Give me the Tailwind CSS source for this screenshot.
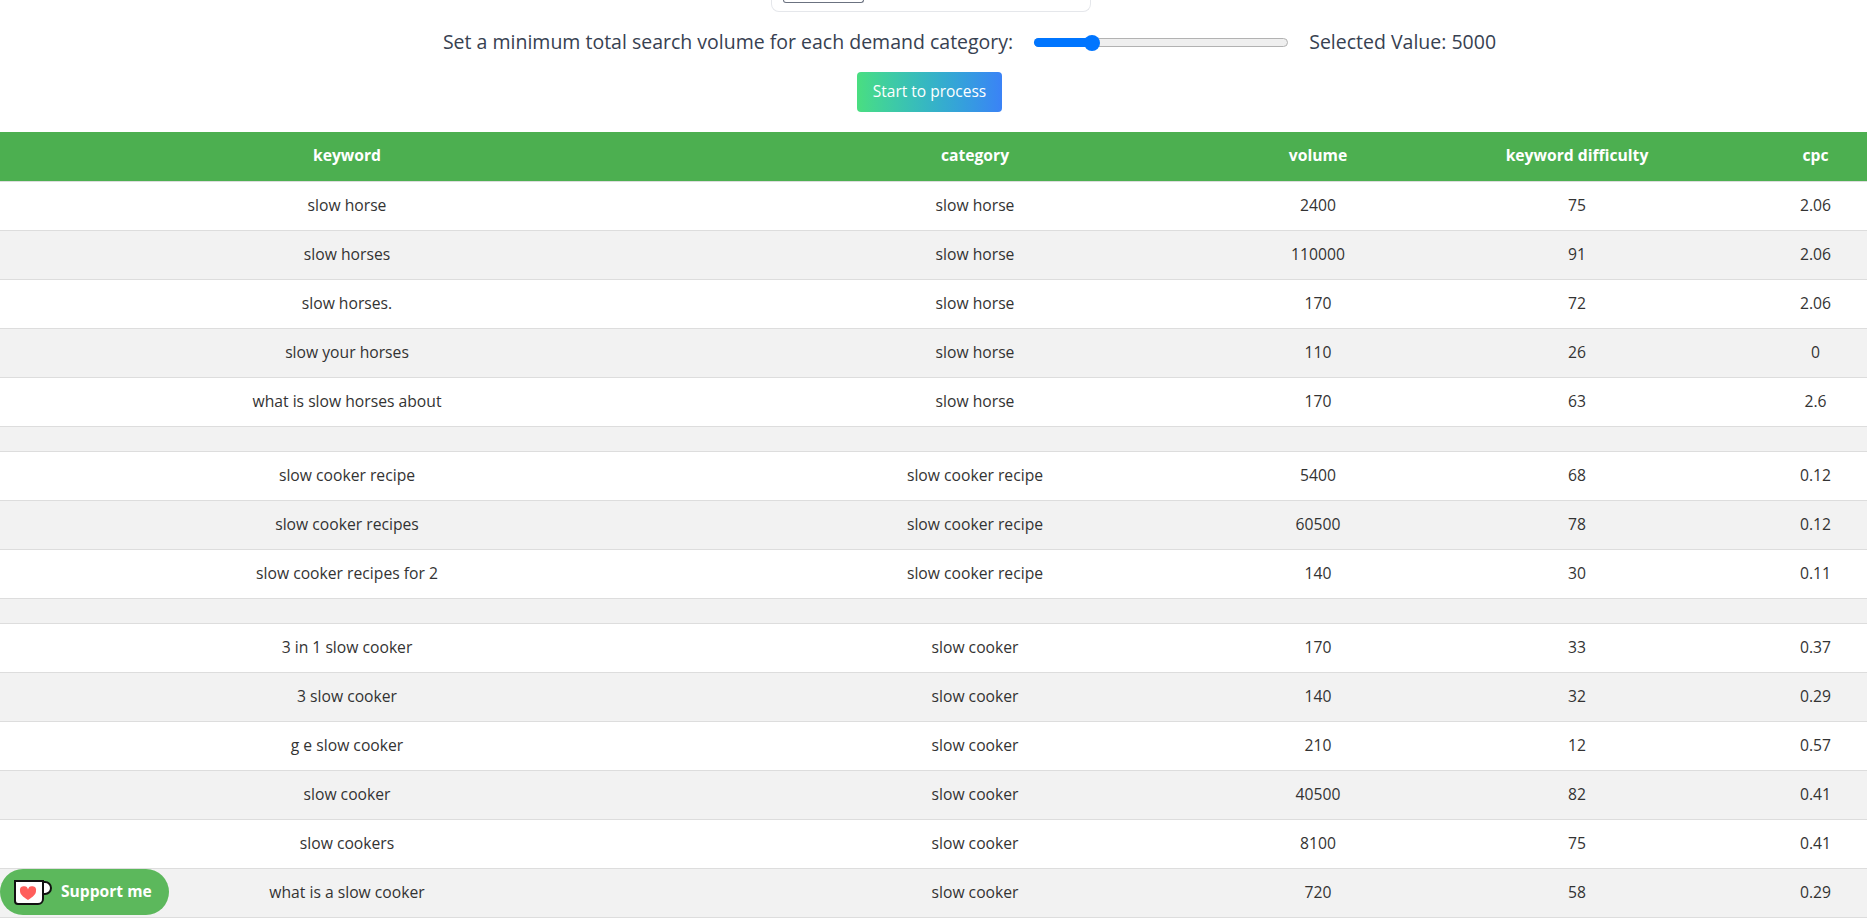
<!DOCTYPE html>
<html lang="en">
<head>
  <meta charset="UTF-8">
  <title>Keyword categories</title>
  <script src="https://cdn.jsdelivr.net/npm/@tailwindcss/browser@4"></script>
</head>
<body class="bg-white text-[#212529] font-['Open_Sans',sans-serif] overflow-hidden h-[920px]">
  <div class="flex justify-center h-3 pr-[6px]">
    <div class="w-[320px] h-3 border border-t-0 border-[#e5e7eb] rounded-b-lg pl-[11px]">
      <div class="w-[81px] h-[3px] border border-t-0 border-[#6b7280] rounded-b-sm"></div>
    </div>
  </div>

  <div class="flex justify-center items-center h-[60px] pl-[72px] text-[19.5px] text-[#374151]">
    <label>Set a minimum total search volume for each demand category:</label>
    <div class="w-[254px] h-[9px] mx-[21px] rounded-full bg-[#efefef] border border-[#b2b2b2] relative">
      <div class="absolute left-[-1px] top-[-1px] h-[9px] w-[58px] rounded-l-full bg-[#0075ff]"></div>
      <div class="absolute left-[49px] top-[-4px] w-4 h-4 rounded-full bg-[#0075ff]"></div>
    </div>
    <span>Selected Value: 5000</span>
  </div>

  <div class="flex justify-center pr-[8px]">
    <button class="w-[145px] h-10 rounded text-white text-[15.5px] bg-gradient-to-r from-[#4ade80] to-[#3b82f6]">Start to process</button>
  </div>

  <table class="w-full mt-[20px] border-collapse table-fixed text-[15.7px] text-center text-[#333333]">
    <colgroup>
      <col class="w-[694px]"><col class="w-[562px]"><col class="w-[124px]"><col class="w-[394px]"><col>
    </colgroup>
    <thead>
      <tr class="h-[49px] bg-[#4caf50] text-white font-bold border-b border-[#dddddd]">
        <th class="pb-[1px]">keyword</th><th class="pb-[1px]">category</th><th class="pb-[1px]">volume</th><th class="pb-[1px]">keyword difficulty</th><th class="pb-[1px] pr-[10px]">cpc</th>
      </tr>
    </thead>
    <tbody id="rows"></tbody>
  </table>

  <a class="fixed left-0 bottom-[5px] h-[46px] w-[169px] rounded-[23px] bg-[#5cb85c] flex items-center text-white font-['Open_Sans',sans-serif] font-bold text-[15.6px]">
    <svg class="ml-[14px] mr-[9px]" width="38" height="25" viewBox="0 0 38 25">
      <path d="M28 2h3a6 6 0 0 1 6 6v0a6 6 0 0 1-6 6h-3z" fill="#fff" stroke="#111" stroke-width="2"/>
      <path d="M1 1h28v18a5 5 0 0 1-5 5H4a3 3 0 0 1-3-3z" fill="#fff" stroke="#111" stroke-width="2"/>
      <path d="M14 20c-5.500-3.500-8-6-8-9a4 4 0 0 1 8-1.500a4 4 0 0 1 8 1.500c0 3-2.500 5.500-8 9z" fill="#ff5e5b"/>
    </svg>
    Support me
  </a>

  <script>
    const data = [
      ['slow horse','slow horse',2400,75,'2.06'],
      ['slow horses','slow horse',110000,91,'2.06'],
      ['slow horses.','slow horse',170,72,'2.06'],
      ['slow your horses','slow horse',110,26,'0'],
      ['what is slow horses about','slow horse',170,63,'2.6'],
      null,
      ['slow cooker recipe','slow cooker recipe',5400,68,'0.12'],
      ['slow cooker recipes','slow cooker recipe',60500,78,'0.12'],
      ['slow cooker recipes for 2','slow cooker recipe',140,30,'0.11'],
      null,
      ['3 in 1 slow cooker','slow cooker',170,33,'0.37'],
      ['3 slow cooker','slow cooker',140,32,'0.29'],
      ['g e slow cooker','slow cooker',210,12,'0.57'],
      ['slow cooker','slow cooker',40500,82,'0.41'],
      ['slow cookers','slow cooker',8100,75,'0.41'],
      ['what is a slow cooker','slow cooker',720,58,'0.29'],
    ];
    document.getElementById('rows').innerHTML = data.map(r => r
      ? `<tr class="h-[49px] border-b border-[#dddddd] even:bg-[#f2f2f2]">${r.map(c => `<td class="last:pr-[10px]">${c}</td>`).join('')}</tr>`
      : `<tr class="h-[25px] border-b border-[#dddddd] even:bg-[#f2f2f2]"><td colspan="5"></td></tr>`
    ).join('');
  </script>
</body>
</html>
